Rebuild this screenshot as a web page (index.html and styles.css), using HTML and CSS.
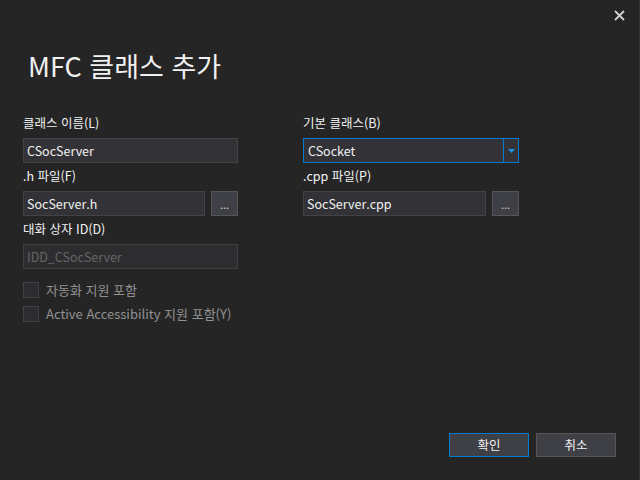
FILE: index.html
```html
<!DOCTYPE html>
<html lang="ko">
<head>
<meta charset="utf-8">
<title>MFC 클래스 추가</title>
<link rel="stylesheet" href="styles.css">
</head>
<body>
<div class="dialog">
  <div class="titlebar">
    <span class="close" aria-label="닫기">
      <svg width="11" height="11" viewBox="0 0 11 11"><path d="M1 1L10 10M10 1L1 10" stroke="#d0d0d0" stroke-width="1.8"/></svg>
    </span>
  </div>
  <h1 class="title">MFC 클래스 추가</h1>
  <div class="form">
    <div class="col">
      <div class="field">
        <div class="label">클래스 이름(L)</div>
        <div class="input">CSocServer</div>
      </div>
      <div class="field">
        <div class="label">.h 파일(F)</div>
        <div class="row">
          <div class="input grow">SocServer.h</div>
          <div class="browse">...</div>
        </div>
      </div>
      <div class="field">
        <div class="label">대화 상자 ID(D)</div>
        <div class="input disabled">IDD_CSocServer</div>
      </div>
      <div class="checks">
        <div class="check"><span class="box"></span><span class="check-label">자동화 지원 포함</span></div>
        <div class="check"><span class="box"></span><span class="check-label">Active Accessibility 지원 포함(Y)</span></div>
      </div>
    </div>
    <div class="col">
      <div class="field">
        <div class="label">기본 클래스(B)</div>
        <div class="combo">
          <span class="combo-text">CSocket</span>
          <span class="combo-btn"><svg width="7" height="4" viewBox="0 0 7 4"><path d="M0 0H7L3.5 4Z" fill="#1c97ea"/></svg></span>
        </div>
      </div>
      <div class="field">
        <div class="label">.cpp 파일(P)</div>
        <div class="row">
          <div class="input grow">SocServer.cpp</div>
          <div class="browse">...</div>
        </div>
      </div>
    </div>
  </div>
  <div class="footer">
    <div class="btn primary">확인</div>
    <div class="btn">취소</div>
  </div>
</div>
</body>
</html>
```

FILE: styles.css
```css
html, body {
  margin: 0;
  padding: 0;
  background: #252526;
}
body {
  font-family: "Noto Sans CJK KR", "Noto Sans", sans-serif;
  font-size: 12.5px;
  color: #f1f1f1;
}
.dialog {
  width: 640px;
  height: 480px;
  box-sizing: border-box;
  border-right: 1px solid #333337;
  display: flex;
  flex-direction: column;
}
.titlebar {
  height: 30px;
  display: flex;
  justify-content: flex-end;
  align-items: flex-start;
  padding: 10px 14px 0 0;
  box-sizing: border-box;
}
.close {
  width: 11px;
  height: 11px;
  display: block;
}
.close svg { display: block; }
.title {
  margin: 19px 0 0 28px;
  font-size: 27px;
  font-weight: normal;
  line-height: 34px;
  height: 34px;
  color: #f1f1f1;
}
.form {
  margin-top: 27px;
  margin-left: 23px;
  display: grid;
  grid-template-columns: 215px 216px;
  column-gap: 65px;
  align-items: start;
}
.col {
  display: flex;
  flex-direction: column;
}
.label {
  line-height: 20px;
  padding: 3px 0 5px 0;
  color: #f1f1f1;
}
.input {
  height: 25px;
  box-sizing: border-box;
  background: #333337;
  border: 1px solid #434346;
  padding: 0 3px;
  line-height: 23px;
  color: #f1f1f1;
  white-space: nowrap;
  overflow: hidden;
}
.input.disabled {
  background: #2d2d30;
  border-color: #3f3f46;
  color: #656565;
}
.row {
  display: flex;
  gap: 6px;
}
.grow { flex: 1; }
.browse {
  width: 27px;
  height: 25px;
  box-sizing: border-box;
  background: #3f3f46;
  border: 1px solid #555558;
  color: #d0d0d0;
  text-align: center;
  line-height: 24px;
  font-size: 11px;
}
.combo {
  height: 25px;
  box-sizing: border-box;
  border: 1px solid #007acc;
  background: #333337;
  display: flex;
}
.combo-text {
  flex: 1;
  padding: 0 4px;
  line-height: 23px;
  color: #f1f1f1;
}
.combo-btn {
  width: 14px;
  border-left: 1px solid #007acc;
  display: flex;
  align-items: center;
  justify-content: center;
}
.combo-btn svg { display: block; }
.checks {
  margin-top: 13px;
  display: flex;
  flex-direction: column;
  gap: 8px;
}
.check {
  display: flex;
  align-items: center;
  gap: 7px;
  height: 16px;
}
.box {
  width: 16px;
  height: 16px;
  box-sizing: border-box;
  background: #2d2d30;
  border: 1px solid #3f3f46;
  display: block;
}
.check-label {
  color: #919191;
  line-height: 16px;
  font-size: 13px;
}
.footer {
  margin-top: auto;
  margin-bottom: 23px;
  margin-right: 23px;
  display: flex;
  justify-content: flex-end;
  gap: 7px;
}
.btn {
  width: 80px;
  height: 24px;
  box-sizing: border-box;
  background: #3f3f46;
  border: 1px solid #555558;
  color: #f1f1f1;
  text-align: center;
  line-height: 22px;
}
.btn.primary {
  border-color: #007acc;
}
```
